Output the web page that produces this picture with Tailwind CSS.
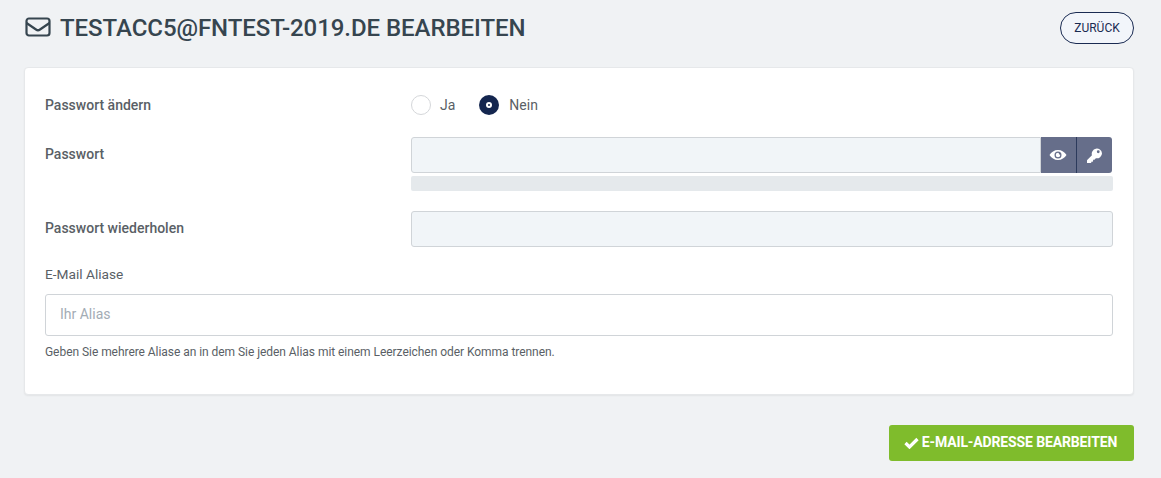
<!DOCTYPE html>
<html lang="de">
<head>
    <meta charset="UTF-8">
    <title>E-Mail bearbeiten</title>
    <script src="https://cdn.jsdelivr.net/npm/@tailwindcss/browser@4"></script>
</head>
<body class="bg-[#f0f2f4] h-[478px] overflow-hidden font-['Roboto',sans-serif] text-[#5a5f66]">
    <div class="pl-[24px] pr-[27px]">
        <!-- header -->
        <div class="flex items-center justify-between h-[67px] pb-[12px]">
            <h1 class="flex items-center text-[24px] font-medium text-[#36454f] leading-none tracking-[-0.06px]">
                <svg class="w-[26px] h-[20px] ml-[1px] mr-[9px] -mt-[2px]" viewBox="0 0 26 20" fill="none" stroke="#36454f" stroke-width="2.2">
                    <rect x="1.5" y="1.5" width="23" height="17" rx="2.5"/>
                    <path d="M1.5 6 L11 12.5 Q13 14 15 12.5 L24.5 6"/>
                </svg>
                TESTACC5@FNTEST-2019.DE BEARBEITEN
            </h1>
            <button class="w-[74px] h-[32px] rounded-full border border-[#1a2b52] bg-[#f2f5fa] text-[12px] font-normal text-[#1a2b52]">ZURÜCK</button>
        </div>

        <!-- card -->
        <div class="bg-white rounded-[4px] border border-[#e6e8ea] shadow-[0_1px_2px_rgba(0,0,0,0.06)] h-[328px] pl-[20px] pr-[20px] pt-[27px]">
            <div class="flex items-center h-[20px] text-[14px]">
                <label class="w-[366px] font-medium">Passwort ändern</label>
                <div class="flex items-center">
                    <span class="w-[20px] h-[20px] rounded-full border border-[#d5d7da] bg-white"></span>
                    <span class="ml-[9px] mr-[24px]">Ja</span>
                    <span class="w-[20px] h-[20px] rounded-full bg-[#14264f] flex items-center justify-center">
                        <span class="w-[6px] h-[6px] rounded-full bg-white flex items-center justify-center">
                            <span class="w-[2px] h-[2px] rounded-full bg-[#14264f]"></span>
                        </span>
                    </span>
                    <span class="ml-[10px]">Nein</span>
                </div>
            </div>

            <div class="flex mt-[22px] text-[14px]">
                <label class="w-[366px] font-medium pt-[7px]">Passwort</label>
                <div class="flex-1">
                    <div class="flex h-[36px] pr-[1px]">
                        <input class="flex-1 min-w-0 bg-[#f1f5f8] border border-[#d0d4d8] rounded-l-[3px]" type="password">
                        <button class="w-[36px] pr-[2px] bg-[#666e8a] border-r border-[#2c3a5c] flex items-center justify-center">
                            <svg class="w-[18px] h-[14px]" viewBox="0 0 576 448" fill="#fff"><path d="M288 64C173 64 71 130 16 224c55 94 157 160 272 160s217-66 272-160C505 130 403 64 288 64zm0 272a112 112 0 1 1 0-224 112 112 0 0 1 0 224zm0-184a72 72 0 1 0 72 72c0-14-20-8-32-16s-6-56-40-56z"/></svg>
                        </button>
                        <button class="w-[35px] bg-[#666e8a] rounded-r-[3px] flex items-center justify-center">
                            <svg class="w-[15px] h-[15px]" viewBox="0 0 512 512" fill="#fff"><path d="M512 176a176 176 0 0 1-209 173l-40 45a24 24 0 0 1-18 8h-37v40a24 24 0 0 1-24 24h-40v40a24 24 0 0 1-24 24H24a24 24 0 0 1-24-24v-78a24 24 0 0 1 7-17l162-162A176 176 0 1 1 512 176zm-176-48a48 48 0 1 0 96 0 48 48 0 0 0-96 0z"/></svg>
                        </button>
                    </div>
                    <div class="h-[15px] mt-[3px] bg-[#e5e9ec] rounded-[2px] w-[702px]"></div>
                </div>
            </div>

            <div class="flex mt-[20px] text-[14px]">
                <label class="w-[366px] font-medium pt-[7px]">Passwort wiederholen</label>
                <input class="flex-1 min-w-0 h-[36px] bg-[#f1f5f8] border border-[#d0d4d8] rounded-[3px]" type="password">
            </div>

            <label class="block mt-[18px] text-[13.7px] leading-[18px]">E-Mail Aliase</label>
            <input class="block w-full h-[42px] mt-[11px] pl-[14px] pb-[3px] bg-white border border-[#d0d4d8] rounded-[3px] text-[14px] placeholder:text-[#a3acb5]" placeholder="Ihr Alias">
            <p class="mt-[9px] text-[12px] leading-[14px] tracking-[-0.05px]">Geben Sie mehrere Aliase an in dem Sie jeden Alias mit einem Leerzeichen oder Komma trennen.</p>
        </div>

        <!-- footer -->
        <div class="flex justify-end mt-[30px]">
            <button class="flex items-center justify-center w-[245px] h-[36px] pr-[2px] pb-[1px] bg-[#7fbc2c] rounded-[3px] text-white text-[14px] font-bold tracking-[-0.13px]">
                <svg class="w-[15px] h-[12px] mr-[3px]" viewBox="0 0 15 12" fill="none" stroke="#fff" stroke-width="3.2"><path d="M1.5 6 L5.5 10 L13.5 2"/></svg>
                E-MAIL-ADRESSE BEARBEITEN
            </button>
        </div>
    </div>
</body>
</html>
